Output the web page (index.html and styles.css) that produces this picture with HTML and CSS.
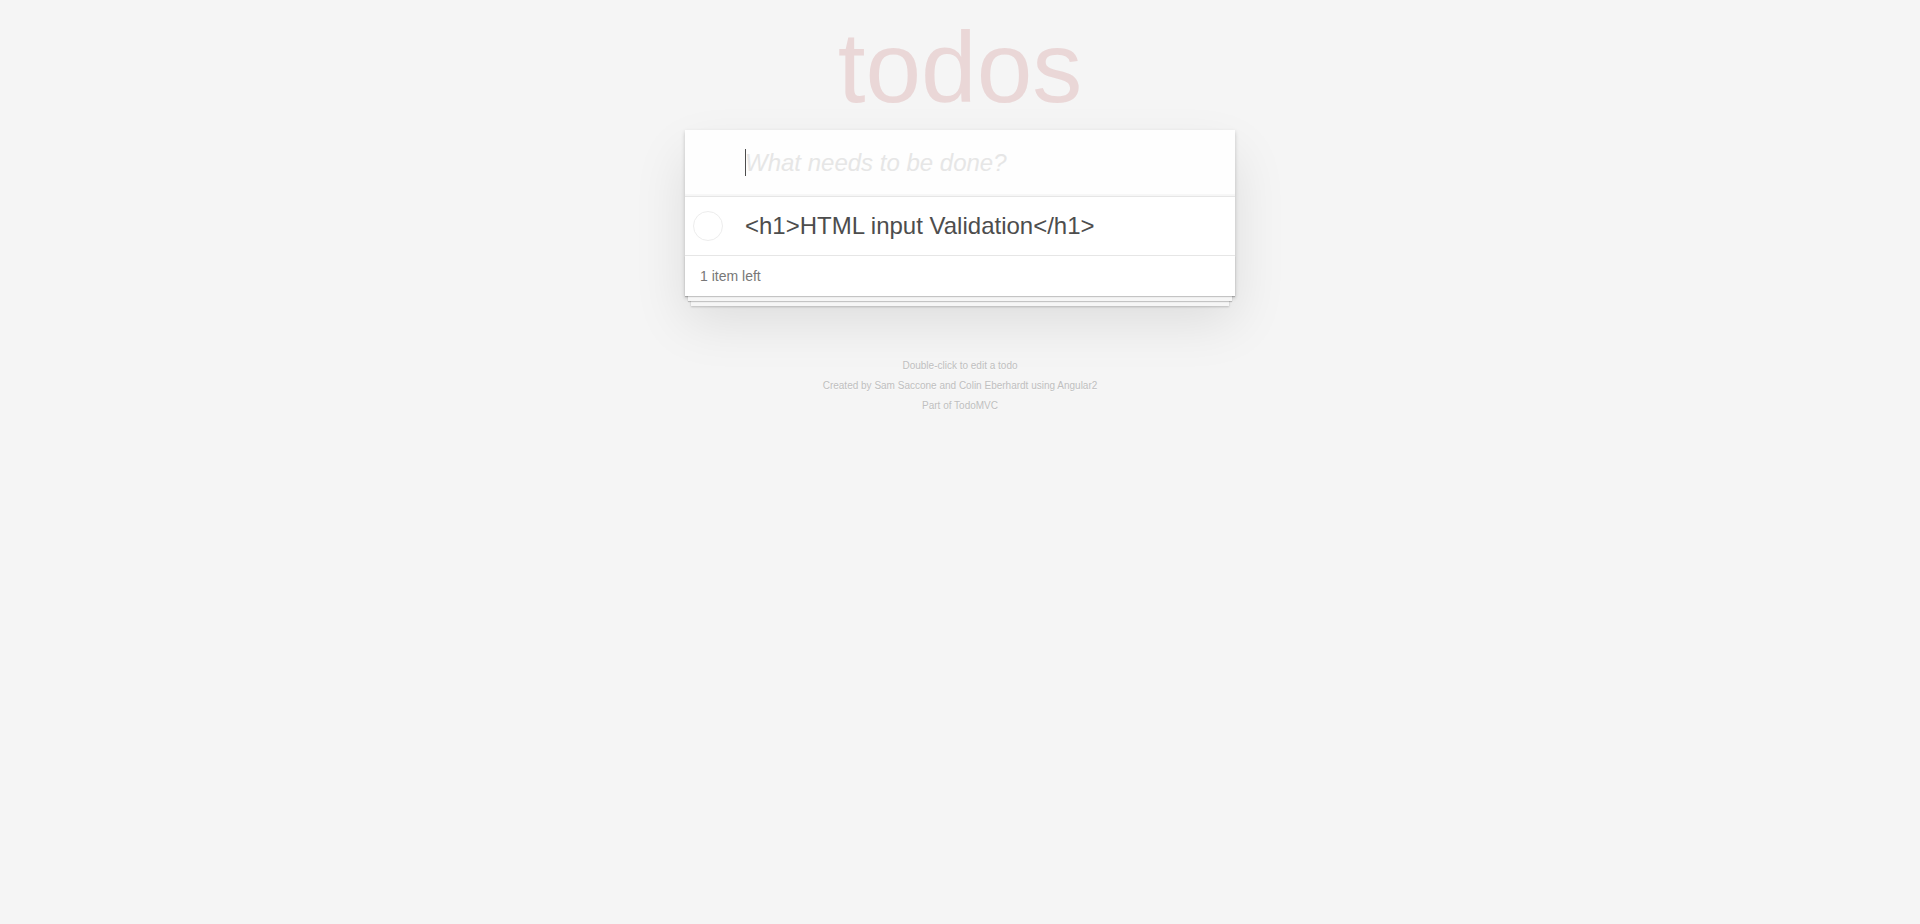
FILE: index.html
```html
<!DOCTYPE html>
<html lang="en">
<head>
<meta charset="utf-8">
<title>Todos</title>
<link rel="stylesheet" href="styles.css">
</head>
<body>
<div class="page">
  <main class="todoapp">
    <h1 class="title">todos</h1>
    <section class="card">
      <div class="entry">
        <input class="new-todo" type="text" placeholder="What needs to be done?" aria-label="New todo" autofocus>
      </div>
      <ul class="todo-list">
        <li class="todo">
          <input class="toggle" type="checkbox" id="todo-1">
          <label class="todo-label" for="todo-1">&lt;h1&gt;HTML input Validation&lt;/h1&gt;</label>
        </li>
      </ul>
      <footer class="footer"><span><strong class="count">1</strong> item left</span></footer>
    </section>
  </main>
  <footer class="info">
    <p>Double-click to edit a todo</p>
    <p>Created by <a href="#">Sam Saccone</a> and <a href="#">Colin Eberhardt</a> using <a href="#">Angular2</a></p>
    <p>Part of <a href="#">TodoMVC</a></p>
  </footer>
</div>
</body>
</html>
```
FILE: styles.css
```css
* {
  box-sizing: border-box;
}

html {
  min-height: 100%;
  background: #f5f5f5;
}

body {
  margin: 0;
  color: #4d4d4d;
  font: 14px/20px "Liberation Sans", Arial, sans-serif;
}

.page {
  min-width: 230px;
  max-width: 550px;
  margin: 0 auto;
}

.title {
  margin: 0;
  padding: 11px 0 7px;
  color: rgba(175, 47, 47, 0.15);
  font-size: 100px;
  font-weight: 400;
  line-height: 112px;
  text-align: center;
}

.card {
  background: #fff;
  box-shadow: 0 2px 4px 0 rgba(0, 0, 0, 0.2), 0 25px 50px 0 rgba(0, 0, 0, 0.1);
}

.entry {
  position: relative;
}

/* Steady text cursor, shown while the field is focused */
.entry:focus-within::after {
  content: "";
  position: absolute;
  top: 19px;
  left: 60px;
  width: 1px;
  height: 27px;
  background: #4d4d4d;
}

.new-todo {
  display: block;
  width: 100%;
  height: 66px;
  padding: 16px 16px 16px 60px;
  border: 0;
  outline: 0;
  background: rgba(0, 0, 0, 0.003);
  box-shadow: inset 0 -2px 1px rgba(0, 0, 0, 0.03);
  color: #4d4d4d;
  caret-color: transparent;
  font: 24px/34px "Liberation Sans", Arial, sans-serif;
}

.new-todo::placeholder {
  color: #e6e6e6;
  font-style: italic;
}

.todo-list {
  margin: 0;
  padding: 0;
  border-top: 1px solid #e6e6e6;
  list-style: none;
}

.todo {
  display: flex;
  align-items: center;
  font-size: 24px;
}

.toggle {
  flex: none;
  width: 30px;
  height: 30px;
  margin: 0 8px;
  border: 1px solid #ededed;
  border-radius: 50%;
  appearance: none;
}

.todo-label {
  flex: 1;
  padding: 15px 15px 15px 14px;
  line-height: 28px;
  word-break: break-word;
}

.footer {
  position: relative;
  padding: 10px 15px;
  border-top: 1px solid #e6e6e6;
  color: #777;
}

.footer::before {
  content: "";
  position: absolute;
  inset: auto 0 0;
  height: 40px;
  box-shadow: 0 1px 1px rgba(0, 0, 0, 0.2), 0 8px 0 -3px #f6f6f6,
    0 9px 1px -3px rgba(0, 0, 0, 0.2), 0 16px 0 -6px #f6f6f6,
    0 17px 2px -6px rgba(0, 0, 0, 0.2);
}

.count {
  font-weight: 400;
}

.info {
  margin-top: 60px;
  color: #bfbfbf;
  font-size: 10px;
  text-align: center;
  text-shadow: 0 1px 0 rgba(255, 255, 255, 0.5);
}

.info p {
  margin: 0;
}

.info a {
  color: inherit;
  text-decoration: none;
}
```
